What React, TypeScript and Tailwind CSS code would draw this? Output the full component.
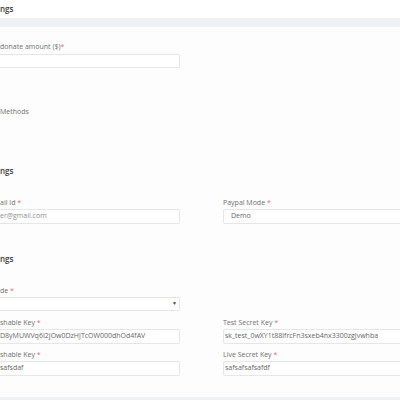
import React from "react";

const Req = () => <span className="text-[#f06a6a]"> *</span>;

function Label({ children, req = true }: { children: React.ReactNode; req?: boolean }) {
  return (
    <div className="h-[10px] leading-[10px] text-[7px] text-[#707070] whitespace-nowrap">
      {children}
      {req && <Req />}
    </div>
  );
}

function Input({ value, placeholder, left = false }: { value?: string; placeholder?: string; left?: boolean }) {
  return (
    <div
      className={
        "mt-[1px] h-[15px] bg-white border border-[#e6e6e6] rounded-[2px] flex items-center text-[7px] whitespace-nowrap overflow-hidden " +
        (left ? "border-l-0 rounded-l-none pl-0" : "pl-[1px]")
      }
    >
      {value ? <span className="text-[#666]">{value}</span> : <span className="text-[#8f8f8f]">{placeholder}</span>}
    </div>
  );
}

export default function App() {
  return (
    <div className="w-[400px] h-[400px] overflow-hidden bg-white font-['Open_Sans',sans-serif] flex flex-col">
      <div className="h-[18px] flex items-center text-[8px] font-semibold text-[#3a3a3a]">ngs</div>
      <div className="h-[9px] bg-[#f0f1f5] shrink-0" />
      <div className="flex-1 bg-[#fdfdfd] flex flex-col">
        <div className="pt-[15px] w-[180px]">
          <div className="h-[10px] leading-[10px] text-[7px] text-[#707070] whitespace-nowrap">
            donate amount ($)<span className="text-[#f06a6a]">*</span>
          </div>
          <div className="mt-[2px] h-[14px] bg-white border border-[#e6e6e6] border-l-0 rounded-r-[2px]" />
        </div>

        <div className="mt-[39px] h-[10px] leading-[10px] text-[7px] text-[#707070]">Methods</div>

        <div className="mt-[49px] h-[10px] leading-[10px] text-[8px] font-semibold text-[#3a3a3a]">ngs</div>

        <div className="mt-[22px] flex gap-[43px]">
          <div className="w-[180px] shrink-0">
            <Label>ail Id</Label>
            <Input placeholder="er@gmail.com" left />
          </div>
          <div className="w-[200px] shrink-0">
            <Label>Paypal Mode</Label>
            <div className="mt-[1px] h-[15px] bg-white border border-[#e6e6e6] rounded-[2px] flex items-center pl-[7px] text-[7px] text-[#666]">
              Demo
            </div>
          </div>
        </div>

        <div className="mt-[30px] h-[10px] leading-[10px] text-[8px] font-semibold text-[#3a3a3a]">ngs</div>

        <div className="mt-[22px] w-[180px]">
          <Label>de</Label>
          <div className="mt-[1px] h-[14px] bg-white border border-[#e6e6e6] border-l-0 rounded-r-[2px] flex items-center justify-end pr-[2px]">
            <span className="text-[5px] text-[#444]">▼</span>
          </div>
        </div>

        <div className="mt-[7px] flex gap-[43px]">
          <div className="w-[180px] shrink-0">
            <Label>shable Key</Label>
            <Input value="D8yMUWVq6I2jOw0DzHJTcOW000dhOd4fAV" left />
          </div>
          <div className="w-[200px] shrink-0">
            <Label>Test Secret Key</Label>
            <Input value="sk_test_0wXY1t88lfrcFn3sxeb4nx3300zgJvwhba" />
          </div>
        </div>

        <div className="mt-[6px] flex gap-[43px]">
          <div className="w-[180px] shrink-0">
            <Label>shable Key</Label>
            <Input value="safsdaf" left />
          </div>
          <div className="w-[200px] shrink-0">
            <Label>Live Secret Key</Label>
            <Input value="safsafsafsafdf" />
          </div>
        </div>
      </div>
      <div className="h-[3px] bg-[#f0f1f5] shrink-0" />
    </div>
  );
}
